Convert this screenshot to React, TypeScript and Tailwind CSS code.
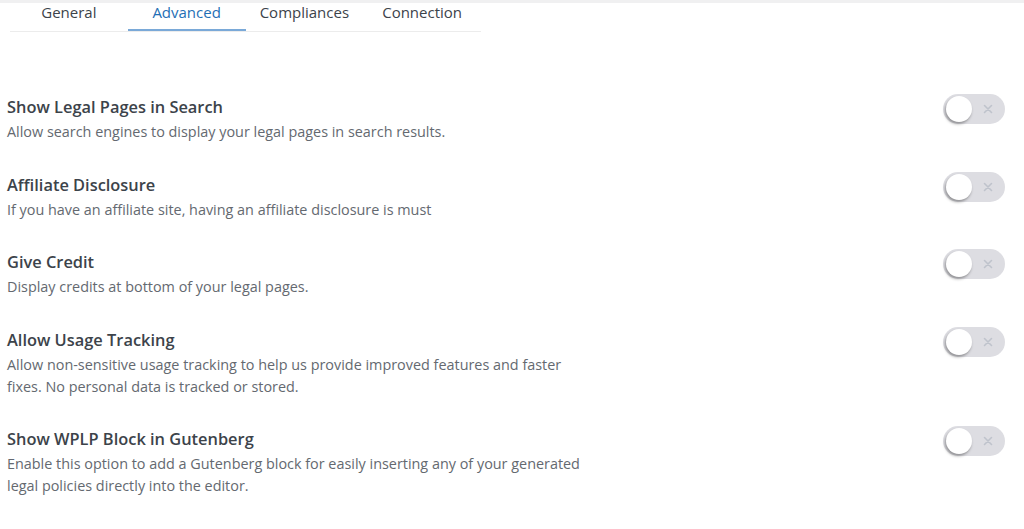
import { ReactNode } from "react";

const tabs = ["General", "Advanced", "Compliances", "Connection"];

const settings: { title: string; desc: ReactNode }[] = [
  {
    title: "Show Legal Pages in Search",
    desc: "Allow search engines to display your legal pages in search results.",
  },
  {
    title: "Affiliate Disclosure",
    desc: "If you have an affiliate site, having an affiliate disclosure is must",
  },
  {
    title: "Give Credit",
    desc: "Display credits at bottom of your legal pages.",
  },
  {
    title: "Allow Usage Tracking",
    desc: (
      <>
        Allow non-sensitive usage tracking to help us provide improved features and faster
        <br />
        fixes. No personal data is tracked or stored.
      </>
    ),
  },
  {
    title: "Show WPLP Block in Gutenberg",
    desc: (
      <>
        Enable this option to add a Gutenberg block for easily inserting any of your generated
        <br />
        legal policies directly into the editor.
      </>
    ),
  },
];

// off-state switch, same for every row
function Toggle() {
  return (
    <div className="relative w-[62px] h-[30px] rounded-full bg-[#dddde2] shrink-0">
      <div className="absolute left-[3px] top-[2px] w-[26px] h-[26px] rounded-full bg-white shadow-[-1px_2px_3px_rgba(0,0,0,0.35)]" />
      <svg
        className="absolute right-[12px] top-[10px] w-[10px] h-[10px]"
        viewBox="0 0 10 10"
        fill="none"
        stroke="#bfc3cc"
        strokeWidth={1.6}
        strokeLinecap="round"
      >
        <path d="M1.5 1.5l7 7M8.5 1.5l-7 7" />
      </svg>
    </div>
  );
}

export default function App() {
  return (
    <div
      className="w-[1024px] h-[529px] bg-white border-t-[3px] border-[#f0f0f1] overflow-hidden"
      style={{ fontFamily: '"Open Sans", "Noto Sans", sans-serif' }}
    >
      <div className="ml-[10px] w-[471px] flex border-b border-[#ececec]">
        {tabs.map((t) => (
          <div
            key={t}
            className={
              "w-[118px] h-[28px] flex items-start justify-center text-[15px] leading-[18px] " +
              (t === "Advanced"
                ? "text-[#1f6fb5] border-b-2 border-[#7aa9d8] -mb-px"
                : "text-[#3c434a]")
            }
          >
            {t}
          </div>
        ))}
      </div>

      <div className="mt-[64px] pl-[7px] pr-[19px] flex flex-col gap-[30.5px]">
        {settings.map((s) => (
          <div key={s.title} className="flex items-start justify-between">
            <div>
              <div className="text-[16.4px] font-semibold text-[#3c434a] leading-[22px]">
                {s.title}
              </div>
              <div className="text-[14.4px] text-[#646970] leading-[22px] mt-[3px]">
                {s.desc}
              </div>
            </div>
            <div className="mt-[-2px]">
              <Toggle />
            </div>
          </div>
        ))}
      </div>
    </div>
  );
}
